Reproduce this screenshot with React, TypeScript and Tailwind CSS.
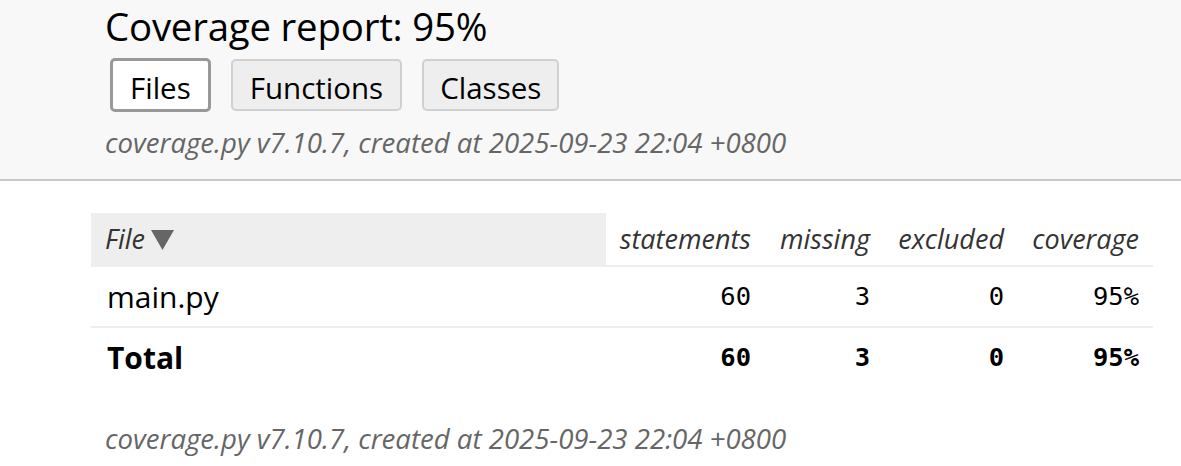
import React from "react";

const sans = "font-['Segoe_UI','Open_Sans','Noto_Sans',sans-serif]";
const mono = "font-['DejaVu_Sans_Mono','Liberation_Mono',monospace]";

const numCls = `${mono} text-[25.5px] text-right pr-[14px]`;

export default function App() {
  return (
    <div className={`${sans} w-[1181px] h-[466px] bg-white text-black overflow-hidden`}>
      <header className="h-[181px] bg-[#f8f8f8] border-b-2 border-[#c8c8c8] pl-[105px]">
        <h1 className="text-[38.4px] leading-[44px] pt-[4px] tracking-[-0.2px]">Coverage report: 95%</h1>
        <div className="flex items-center gap-[20px] mt-[10px] ml-[5px]">
          <button className="h-[54px] px-[17px] pt-[6px] bg-white border-[3px] border-[#999] rounded-[5px] text-[29.5px] leading-none">Files</button>
          <button className="h-[52px] px-[17px] pt-[6px] bg-[#eee] border-2 border-[#d0d0d0] rounded-[5px] text-[29.5px] leading-none">Functions</button>
          <button className="h-[52px] px-[16px] pt-[6px] bg-[#eee] border-2 border-[#d0d0d0] rounded-[5px] text-[29.5px] leading-none">Classes</button>
        </div>
        <p className="italic text-[#666] text-[27.6px] leading-[32px] mt-[14px]">coverage.py v7.10.7, created at 2025-09-23 22:04 +0800</p>
      </header>
      <div className="pl-[91px] pt-[32px]">
        <table className="w-[1062px] border-collapse table-fixed">
          <colgroup>
            <col className="w-[515px]" />
            <col className="w-[159px]" />
            <col className="w-[119px]" />
            <col className="w-[134px]" />
            <col className="w-[135px]" />
          </colgroup>
          <thead>
            <tr className="border-b-2 border-[#eee] h-[53px] italic text-[#333] text-[27px]">
              <th className="bg-[#eee] text-left font-normal pl-[14px]">
                <span className="inline-flex items-center gap-[6px]">
                  File
                  <svg width="23" height="20" viewBox="0 0 23 20" className="mt-[2px]">
                    <polygon points="0,0 23,0 11.5,20" fill="#666" />
                  </svg>
                </span>
              </th>
              <th className="text-right font-normal pr-[14px]">statements</th>
              <th className="text-right font-normal pr-[14px]">missing</th>
              <th className="text-right font-normal pr-[14px]">excluded</th>
              <th className="text-right font-normal pr-[14px]">coverage</th>
            </tr>
          </thead>
          <tbody>
            <tr className="border-b-2 border-[#eee] h-[61px]">
              <td className="text-[30px] pl-[16px]">main.py</td>
              <td className={numCls}>60</td>
              <td className={numCls}>3</td>
              <td className={numCls}>0</td>
              <td className={numCls}>95%</td>
            </tr>
            <tr className="h-[60px] font-bold">
              <td className="text-[30px] pl-[16px]">Total</td>
              <td className={numCls}>60</td>
              <td className={numCls}>3</td>
              <td className={numCls}>0</td>
              <td className={numCls}>95%</td>
            </tr>
          </tbody>
        </table>
      </div>
      <p className="italic text-[#666] text-[27.6px] leading-[32px] pl-[105px] mt-[35px]">coverage.py v7.10.7, created at 2025-09-23 22:04 +0800</p>
    </div>
  );
}
